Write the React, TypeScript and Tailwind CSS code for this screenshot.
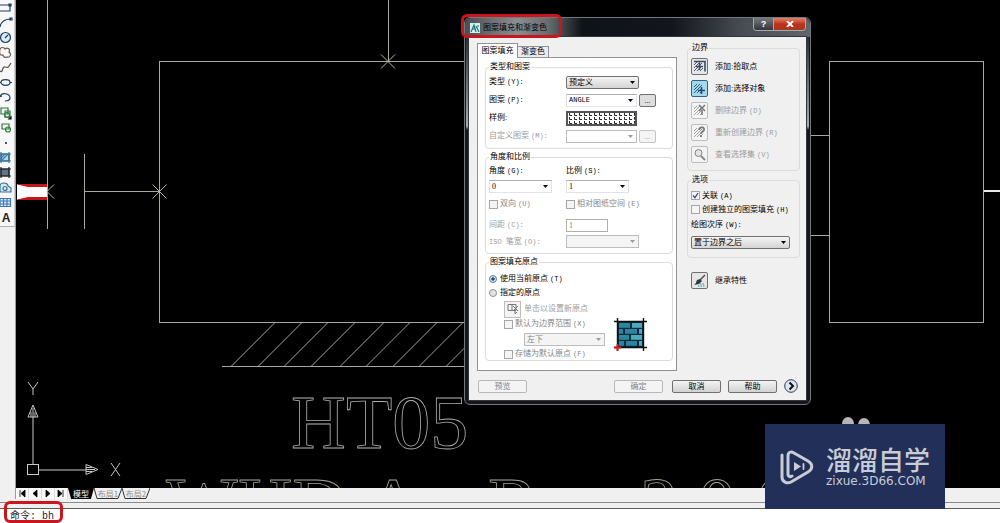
import { useState } from 'react';
import type { ReactNode } from 'react';
import clsx from 'clsx';

function Key({ children }: { children: ReactNode }) {
  return <span className="ml-0.5 font-['Liberation_Mono',monospace] text-[7px]">{children}</span>;
}

function Group({ title, className, children }: { title: string; className?: string; children: ReactNode }) {
  return (
    <fieldset className={clsx('min-w-0 rounded-sm border border-[#dcdcdc] px-[3px]', className)}>
      <legend className="h-3 px-px leading-3">{title}</legend>
      {children}
    </fieldset>
  );
}

type SelectProps = {
  id: string;
  label?: string;
  options: string[];
  disabled?: boolean;
  flat?: boolean;
  className?: string;
};

function Select({ id, label, options, disabled, flat, className }: SelectProps) {
  return (
    <div className={clsx('relative h-[13px]', className)}>
      <select
        id={id}
        aria-label={label}
        disabled={disabled}
        className={clsx(
          'block h-full w-full appearance-none border pl-0.5 pr-3 leading-[11px] disabled:opacity-100',
          flat && !disabled && 'border-[#e2e3ea] border-t-[#abadb3] bg-white',
          !flat && !disabled && 'rounded-xs border-[#707070] bg-linear-to-b from-[#f4f4f4] to-[#d4d4d4]',
          disabled && 'border-[#bcbcbc] text-[#838383]',
          disabled && (flat ? 'bg-white' : 'bg-[#f4f4f4]'),
        )}
      >
        {options.map((o) => (
          <option key={o}>{o}</option>
        ))}
      </select>
      <svg viewBox="0 0 5 3" className="pointer-events-none absolute right-1 top-[5px] h-[3px] w-[5px]">
        <path d="M0 0h5L2.500 3z" fill={disabled ? '#9a9a9a' : '#000'} />
      </svg>
    </div>
  );
}

type CheckProps = { label: string; hotkey?: string; disabled?: boolean; defaultChecked?: boolean };

function Check({ label, hotkey, disabled, defaultChecked }: CheckProps) {
  return (
    <label className={clsx('flex items-center gap-0.5', disabled && 'text-[#838383]')}>
      <span className="relative block h-[9px] w-[9px] shrink-0">
        <input
          type="checkbox"
          disabled={disabled}
          defaultChecked={defaultChecked}
          className="peer block h-full w-full appearance-none border border-[#a4a6a8] bg-[#f4f4f4]"
        />
        <svg viewBox="0 0 9 9" className="pointer-events-none absolute inset-0 hidden peer-checked:block">
          <path d="M2 4.500l2 2.200 3-4.700" fill="none" stroke="#3b4a90" strokeWidth="1.300" />
        </svg>
      </span>
      <span>
        {label}
        {hotkey && <Key>{hotkey}</Key>}
      </span>
    </label>
  );
}

function Radio({ label, hotkey, ...rest }: { label: string; hotkey?: string; checked: boolean; onChange: () => void }) {
  return (
    <label className="flex h-[14px] items-center gap-[3px]">
      <input
        type="radio"
        name="origin"
        className="h-2 w-2 appearance-none rounded-full border border-[#8e8f8f] bg-[#e4e4e4] checked:border-[#5f7a92] checked:bg-[radial-gradient(circle,#16324f_0,#2f6c9c_34%,#d5e6f2_48%)]"
        {...rest}
      />
      <span>
        {label}
        {hotkey && <Key>{hotkey}</Key>}
      </span>
    </label>
  );
}

function PushButton({ children, disabled }: { children: ReactNode; disabled?: boolean }) {
  return (
    <button
      type="button"
      disabled={disabled}
      className={clsx(
        'h-[13px] w-[49px] rounded-xs border leading-[11px]',
        disabled
          ? 'border-[#b8b8b8] bg-[#f4f4f4] text-[#838383]'
          : 'border-[#707070] bg-linear-to-b from-[#f4f4f4] to-[#d2d2d2]',
      )}
    >
      {children}
    </button>
  );
}

type ToolProps = { label: string; hotkey?: string; disabled?: boolean; active?: boolean; icon: ReactNode };

function ToolRow({ label, hotkey, disabled, active, icon }: ToolProps) {
  return (
    <button
      type="button"
      disabled={disabled}
      className={clsx('flex items-center gap-[7px] text-left', disabled && 'text-[#9c9c9c]')}
    >
      <span
        className={clsx(
          'flex h-[17px] w-[17px] items-center justify-center rounded-xs border',
          disabled && 'border-[#bdbdbd] bg-[#f4f4f4]',
          active && 'border-[#2c628b] bg-[#a6d8ec]',
          !disabled && !active && 'border-[#707070] bg-[#e6e6e6]',
        )}
      >
        {icon}
      </span>
      <span>
        {label}
        {hotkey && <Key>{hotkey}</Key>}
      </span>
    </button>
  );
}

function HatchIcon({ color, children }: { color: string; children?: ReactNode }) {
  return (
    <svg viewBox="0 0 13 13" className="h-[13px] w-[13px]" fill="none" stroke={color}>
      <path d="M1 5l3-3M1 8l6-6M1 11l8-8M4 11l5-5M7 11l3-3" strokeWidth="0.900" />
      {children}
    </svg>
  );
}

function BrickPreview() {
  const bricks = [
    [5, 5, 11], [18, 5, 10],
    [5, 11, 4], [11, 11, 12], [25, 11, 3],
    [5, 17, 10], [17, 17, 11],
    [5, 23, 5], [12, 23, 11], [25, 23, 3],
  ];
  return (
    <svg viewBox="0 0 33 33" className="h-[33px] w-[33px]">
      <rect x="4" y="4" width="25" height="25" fill="#0f2a3a" />
      {bricks.map(([x, y, w]) => (
        <rect key={`${x}-${y}`} x={x} y={y} width={w} height="4.800" fill={x > 16 ? '#4fa9be' : '#2b86a2'} />
      ))}
      <path d="M0 3.500h33M3.500 0v33M29.500 0v33M0 29.500h33" stroke="#111" strokeWidth="1.400" />
      <path d="M0 29.500h7M3.500 26v7" stroke="#d01818" strokeWidth="1.800" />
    </svg>
  );
}

const DRAW_TOOLS: { name: string; icon: ReactNode }[] = [
  { name: '矩形', icon: <path d="M-2 5h12v6H-2zM9 4h2v2H9z" /> },
  { name: '圆弧', icon: <path d="M0 12C1 6 5 4 11 4M10 3h2v2h-2z" /> },
  {
    name: '圆',
    icon: (
      <>
        <circle cx="5.500" cy="7.500" r="5" fill="#dde9f3" />
        <path d="M5 8l3-3" />
      </>
    ),
  },
  { name: '修订云线', icon: <path stroke="#6b5a54" d="M0 4c1-2 4-2 5 0 2-2 6 0 4 3 3 2 1 6-2 5-2 1-4 0-4-2-3 1-4-2-3-6" /> },
  { name: '样条曲线', icon: <path stroke="#59504c" d="M0 11c3 3 2-5 5-4s3 1 6-4" /> },
  {
    name: '椭圆',
    icon: (
      <>
        <ellipse cx="5.500" cy="7.500" rx="4.500" ry="2.800" />
        <path d="M-1 7.500h2M10 7.500h2" />
      </>
    ),
  },
  { name: '椭圆弧', icon: <path d="M0 7c1-5 10-4 10 1 0 2-2 3-5 3M2 6l-3 1 0-3" /> },
  {
    name: '插入块',
    icon: (
      <>
        <path stroke="#2f7a3c" d="M1 3h7v6H1zM5 6h5v6H5z" />
        <circle cx="7" cy="10" r="2.500" stroke="#2f7a3c" />
        <path d="M11 14h-2l2-2z" fill="#111" stroke="#111" />
      </>
    ),
  },
  {
    name: '创建块',
    icon: (
      <>
        <path stroke="#2f7a3c" d="M2 4h7v5H2z" />
        <circle cx="8" cy="9.500" r="2.500" stroke="#2f7a3c" />
      </>
    ),
  },
  { name: '点', icon: <circle cx="6" cy="8" r="0.500" fill="#1b3e63" /> },
  {
    name: '图案填充',
    icon: (
      <>
        <path fill="#b5d7ea" d="M1 4h8v7H1z" />
        <path stroke="#3c7aa4" d="M-1 4h12M-1 11h12M1 2v11M9 2v11M2 10l6-6M1 8l4-4" />
      </>
    ),
  },
  {
    name: '渐变色',
    icon: (
      <>
        <path fill="#6b727c" d="M1 4h8v7H1z" />
        <path stroke="#1d232b" d="M-1 4h12M-1 11h12M1 2v11M9 2v11" />
      </>
    ),
  },
  {
    name: '面域',
    icon: (
      <>
        <path stroke="#3c6f94" fill="#d5e7f2" d="M0 12V6c0-4 8-4 8 0l3 2v4z" />
        <circle cx="5" cy="8.500" r="2" stroke="#3c6f94" />
      </>
    ),
  },
  { name: '表格', icon: <path stroke="#3d78b5" fill="#dcebfa" d="M0 3.500h10.500v8H0zM0 6h10M0 9h10M3.500 4v7M7 4v7" /> },
];

function DrawToolbar() {
  return (
    <aside className="w-4 shrink-0 border-r border-[#9c9c9c] bg-[#f0f0f0]">
      <div className="border-b border-r border-b-[#b0b0b0] border-r-[#d0d0d0] bg-[#f8f8f8]">
        {DRAW_TOOLS.map((t) => (
          <button key={t.name} type="button" aria-label={t.name} className="block h-[15px] w-full overflow-hidden">
            <svg viewBox="0 0 14 15" className="h-[15px] w-[14px]" fill="none" stroke="#1b3e63" strokeWidth="1.200">
              {t.icon}
            </svg>
          </button>
        ))}
        <button type="button" className="block h-[16px] w-full pr-0.5 font-['Liberation_Sans',sans-serif] text-[12px] font-bold leading-[12px] text-[#222]">
          A
        </button>
      </div>
    </aside>
  );
}

// bottom x of each hatch line under the rectangle
const HATCH_X = [231, 258, 284, 311, 340, 366, 393, 419, 446];

function Drawing() {
  return (
    <svg className="block h-full w-full" fill="none" fontFamily="'Liberation Serif', serif">
      <g transform="translate(-16 0)">
        <path d="M17 184h30v16H17z" fill="#c4161c" />
        <path d="M17 184.500l11 2.500h19v10H28l-11 2.500z" fill="#fff" />
        <g stroke="#a9a99a" shapeRendering="crispEdges">
          <path d="M47.500 0v229M84.500 154v75M84 191.500h75" />
          <path d="M159.500 61v261M159 61.500h560M159 322.500h560M388.500 0v61" />
          <path d="M829.500 61h154v261h-154zM700 135.500h129M700 235.500h129" />
          <path d="M222 366.500h400" />
        </g>
        <path d="M984 191h400" stroke="#e8e8e8" strokeWidth="2" />
        <path d="M54 184.500l-7 7 7 7M152.500 184.500l14 14m0-14l-14 14M381 54.500l14 14m0-14l-14 14" stroke="#b9b9a4" />
        {HATCH_X.map((x) => (
          <path key={x} d={`M${x} 366.500l44-44`} stroke="#b4b4b4" strokeWidth="0.900" />
        ))}
        <g stroke="#c8c8c8">
          <path d="M33 465v-48M38.500 470H86" />
          <rect x="27.500" y="464.500" width="11" height="10" />
          <path d="M33 405l-5 12h10zM98 469.500l-12-5v10zM33 408v9M31 412v5M35 412v5M95 469.500h-9M92 467.500h-6M92 471.500h-6" />
          <path d="M28 382l5 7 5-7M33 389v6M111 463l9 13m0-13l-9 13" />
        </g>
        <text x="291" y="448" fontSize="76" stroke="#b0b0b0" strokeWidth="0.800">HT05</text>
        <g fontSize="76" stroke="#a8a890" strokeWidth="0.800">
          <text x="166" y="530">WHD</text>
          <text x="366" y="530">A</text>
          <text x="488" y="530">R</text>
          <text x="640" y="530">2</text>
          <text x="698" y="530">0</text>
          <text x="756" y="530">0</text>
        </g>
      </g>
    </svg>
  );
}

function LayoutTabs() {
  return (
    <div className="flex h-[11px] items-stretch bg-[#f0f0f0] font-['Noto_Sans_CJK_SC',sans-serif] text-[8px] leading-[11px]">
      {[
        ['第一个', 'M4 2v7M9 2v7L5 5.500z'],
        ['上一个', 'M8 2v7L4 5.500z'],
        ['下一个', 'M4 2v7l4-3.500z'],
        ['最后一个', 'M8 2v7M3 2v7l4-3.500z'],
      ].map(([name, d]) => (
        <button key={name} type="button" aria-label={name} className="w-[13px] border-r border-[#dadada] bg-[#fafafa]">
          <svg viewBox="0 0 12 11" className="h-[11px] w-3">
            <path d={d} fill="#000" stroke="#000" strokeWidth="0.800" />
          </svg>
        </button>
      ))}
      <button type="button" className="w-[26px] bg-black text-white [clip-path:polygon(0_0,100%_0,88%_100%,12%_100%)]">
        模型
      </button>
      {['布局1', '布局2'].map((t) => (
        <button key={t} type="button" className="relative w-7 text-[#8d8d8d]">
          <svg viewBox="0 0 28 11" className="absolute inset-0 h-full w-full" fill="none">
            <path d="M0 0l3 10.500h21L28 0" stroke="#333" />
          </svg>
          {t}
        </button>
      ))}
    </div>
  );
}

function HatchTab() {
  const [origin, setOrigin] = useState<'current' | 'specified'>('current');

  return (
    <div className="flex flex-1 flex-col gap-0.5 border border-[#8f9297] bg-white pb-[9px] pl-[7px] pr-[3px] pt-[3px]">
      <Group title="类型和图案" className="pb-[3px]">
        <div className="grid grid-cols-[77px_1fr] auto-rows-[18px] items-center">
          <label htmlFor="type">类型<Key>(Y):</Key></label>
          <Select id="type" options={['预定义', '用户定义', '自定义']} className="w-[73px]" />
          <label htmlFor="pattern">图案<Key>(P):</Key></label>
          <div className="flex items-center gap-0.5">
            <Select id="pattern" options={['ANGLE', 'ANSI31']} flat className="w-[71px] font-['Liberation_Mono',monospace] text-[7px]" />
            <button type="button" className="h-[13px] w-[17px] rounded-xs border border-[#707070] bg-[#dedede] leading-[7px]">...</button>
          </div>
          <span>样例:</span>
          <button type="button" aria-label="样例" className="h-[15px] w-[71px] border-2 border-[#555] bg-white">
            <svg className="block h-full w-full">
              <pattern id="angle" width="5" height="4" patternUnits="userSpaceOnUse">
                <path d="M1.500 0v2.500H4" fill="none" stroke="#111" strokeWidth="0.900" />
              </pattern>
              <rect width="100%" height="100%" fill="url(#angle)" />
            </svg>
          </button>
          <label htmlFor="custom" className="text-[#9c9c9c]">自定义图案<Key>(M):</Key></label>
          <div className="flex items-center gap-0.5">
            <Select id="custom" options={['']} flat disabled className="w-[71px]" />
            <button type="button" disabled className="h-[13px] w-[17px] rounded-xs border border-[#c4c4c4] bg-[#f4f4f4] leading-[7px] text-[#9c9c9c]">...</button>
          </div>
        </div>
      </Group>

      <Group title="角度和比例" className="pb-[5px]">
        <div className="grid grid-cols-[77px_1fr] grid-rows-[16px_14px_22px_20px_13px] items-center">
          <label htmlFor="angle-value">角度<Key>(G):</Key></label>
          <label htmlFor="scale">比例<Key>(S):</Key></label>
          <Select id="angle-value" options={['0', '45', '90']} flat className="w-[63px]" />
          <Select id="scale" options={['1', '2', '5']} flat className="w-[63px]" />
          <Check label="双向" hotkey="(U)" disabled />
          <Check label="相对图纸空间" hotkey="(E)" disabled />
          <label htmlFor="spacing" className="text-[#9c9c9c]">间距<Key>(C):</Key></label>
          <input id="spacing" disabled defaultValue="1" className="h-[13px] w-[42px] border border-[#afafaf] bg-white px-0.5 text-[#777]" />
          <label htmlFor="iso" className="text-[#9c9c9c]">
            <span className="font-['Liberation_Mono',monospace] text-[7px]">ISO </span>笔宽<Key>(O):</Key>
          </label>
          <Select id="iso" options={['']} disabled className="w-[73px]" />
        </div>
      </Group>

      <Group title="图案填充原点">
        <div className="pt-1">
          <Radio label="使用当前原点" hotkey="(T)" checked={origin === 'current'} onChange={() => setOrigin('current')} />
          <Radio label="指定的原点" checked={origin === 'specified'} onChange={() => setOrigin('specified')} />
        </div>
        <div className="flex justify-between pl-[15px] pr-[22px]">
          <div>
            <button type="button" disabled className="flex h-[18px] items-center gap-[3px] text-[#9c9c9c]">
              <span className="flex h-[17px] w-[17px] items-center justify-center border border-[#bdbdbd] bg-[#f4f4f4]">
                <svg viewBox="0 0 12 12" className="h-3 w-3" fill="none" stroke="#777">
                  <path d="M1 1.500h8v6H1zM5 1v6M6 3l5 5M11 3L6 8M8 6v5l2-2" />
                </svg>
              </span>
              单击以设置新原点
            </button>
            <div className="flex h-3 items-center">
              <Check label="默认为边界范围" hotkey="(X)" disabled />
            </div>
            <div className="flex h-[18px] items-center pl-5">
              <Select id="extents" label="边界范围" options={['左下', '右下', '右上', '左上', '正中']} disabled className="w-[81px]" />
            </div>
            <div className="flex h-3 items-center">
              <Check label="存储为默认原点" hotkey="(F)" disabled />
            </div>
          </div>
          <div className="self-end pb-[9px]">
            <BrickPreview />
          </div>
        </div>
      </Group>
    </div>
  );
}

function BoundaryColumn() {
  return (
    <div className="flex min-w-0 flex-1 flex-col pl-[10px] pr-1.5">
      <Group title="边界" className="mt-[5px]">
        <div className="flex flex-col gap-[5px] pb-[7px] pt-1">
          <ToolRow label="添加:拾取点" icon={<HatchIcon color="#3c4a66"><path d="M1 1.500h11v10M6.500 3v7M3 6.500h7" strokeWidth="1.600" /></HatchIcon>} />
          <ToolRow label="添加:选择对象" active icon={<HatchIcon color="#234f6e"><path d="M8.500 5v7M5 8.500h7" strokeWidth="1.600" /></HatchIcon>} />
          <ToolRow label="删除边界" hotkey="(D)" disabled icon={<HatchIcon color="#9a9a9a"><path d="M6 1l6 6M12 1L6 7M9 6v5" strokeWidth="1.500" stroke="#777" /></HatchIcon>} />
          <ToolRow label="重新创建边界" hotkey="(R)" disabled icon={<HatchIcon color="#9a9a9a"><path d="M6 4c1-4 6-3 5 0-1 2-3 2-3 4M8 9v2" strokeWidth="1.800" stroke="#777" /></HatchIcon>} />
          <ToolRow
            label="查看选择集"
            hotkey="(V)"
            disabled
            icon={
              <svg viewBox="0 0 13 13" className="h-[13px] w-[13px]" fill="none" stroke="#858585">
                <circle cx="5.500" cy="5" r="3.500" fill="#e4e4e4" />
                <path d="M8 8l4 4" strokeWidth="1.800" />
              </svg>
            }
          />
        </div>
      </Group>

      <Group title="选项" className="mt-[3px] pb-2">
        <div className="flex flex-col gap-px pt-[3px]">
          <div className="flex h-[13px] items-center"><Check label="关联" hotkey="(A)" defaultChecked /></div>
          <div className="flex h-[13px] items-center"><Check label="创建独立的图案填充" hotkey="(H)" /></div>
          <label htmlFor="order" className="flex h-4 items-center">绘图次序<Key>(W):</Key></label>
          <Select id="order" options={['置于边界之后', '置于边界之前', '后置', '前置', '不指定']} className="mt-0.5 w-[99px]" />
        </div>
      </Group>

      <div className="mt-3.5 pl-1">
        <ToolRow
          label="继承特性"
          icon={
            <svg viewBox="0 0 13 13" className="h-[13px] w-[13px]" fill="none">
              <path d="M12 1L7 6" stroke="#555" strokeWidth="1.600" />
              <path d="M7 5l2 2-3 3-5 1c2-1 2-3 3-5z" fill="#2d3a44" />
              <path d="M5 12h7M7 10h5" stroke="#3f8c8c" strokeDasharray="1.500 1" />
            </svg>
          }
        />
      </div>
    </div>
  );
}

function HatchDialog() {
  return (
    <div
      role="dialog"
      aria-labelledby="dialog-title"
      className="absolute left-[464px] top-[17px] w-[347px] rounded-md border border-[#73777e] bg-[linear-gradient(180deg,#15181d_0%,#3a3f45_8%,#a8acb0_28%,#14161b_29%)] px-1 pb-1 font-['Liberation_Serif','Noto_Sans_CJK_SC',serif] text-[8px] leading-3 text-black shadow-[inset_0_0_0_1px_#16181d]"
    >
      <header className="-mx-1 flex h-[19px] items-center gap-[3px] rounded-t-md bg-[linear-gradient(90deg,#4a4e53_0,#8b8e91_15%,#6a6d70_24%,#0e1319_34%,#12161c_60%,#474c52_80%,#60656b_100%)] pl-[5px]">
        <svg viewBox="0 0 10 10" className="h-[10px] w-[10px]">
          <rect width="10" height="10" fill="#d9ecec" />
          <path d="M1 9l3-7 2 7M2 6h3M6 3l3 6M7 3h2" fill="none" stroke="#17767c" strokeWidth="1.200" />
        </svg>
        <h1 id="dialog-title" className="flex-1">图案填充和渐变色</h1>
        <div className="mr-1 flex self-start overflow-hidden rounded-b-sm border border-t-0 border-[#a6a9ad]">
          <button type="button" aria-label="帮助" className="h-3 w-[19px] bg-linear-to-b from-[#777b80] to-[#33373c] font-['Liberation_Sans',sans-serif] text-[9px] font-bold leading-3 text-white">?</button>
          <button type="button" aria-label="关闭" className="flex h-3 w-8 items-center justify-center border-l border-[#a6a9ad] bg-linear-to-b from-[#d9836f] via-[#c0301a] to-[#a33a20]">
            <svg viewBox="0 0 8 6" className="h-1.5 w-2"><path d="M1 0l6 6M7 0L1 6" stroke="#fff" strokeWidth="1.800" /></svg>
          </button>
        </div>
      </header>

      <div className="bg-[#f0f0f0] pb-[7px] shadow-[0_0_0_1px_#33363b]">
        <div className="flex">
          <div className="ml-2 flex w-[200px] flex-col pt-[6px]">
            <div role="tablist" className="flex h-[14px] items-end">
              <button type="button" role="tab" aria-selected="true" className="relative -mb-px h-[15px] w-[41px] border border-b-0 border-[#8f9297] bg-white">图案填充</button>
              <button type="button" role="tab" aria-selected="false" className="h-[11px] w-[31px] border border-b-0 border-l-0 border-[#8f9297] bg-[#ebebeb] leading-[10px]">渐变色</button>
            </div>
            <HatchTab />
          </div>
          <BoundaryColumn />
        </div>
        <div className="mt-2 flex items-center pl-[9px] pr-2">
          <PushButton disabled>预览</PushButton>
          <div className="ml-auto flex items-center gap-[7px]">
            <span className="mr-0.5 flex"><PushButton disabled>确定</PushButton></span>
            <PushButton>取消</PushButton>
            <PushButton>帮助</PushButton>
            <button type="button" aria-label="展开">
              <svg viewBox="0 0 14 14" className="block h-[14px] w-[14px]" fill="none">
                <circle cx="7" cy="7" r="6.300" fill="#dde7f2" stroke="#2a3b55" />
                <path d="M5.500 3.500L9 7l-3.500 3.500" stroke="#111" strokeWidth="2" />
              </svg>
            </button>
          </div>
        </div>
      </div>

      <div className="pointer-events-none absolute -left-[4px] -top-[4px] h-6 w-[101px] rounded-md border-[3px] border-[#c9151b]" />
    </div>
  );
}

function Watermark() {
  return (
    <div className="absolute bottom-[14px] right-[55px] flex h-[85px] w-[180px] items-center gap-3 bg-[#223059] pl-[15px] text-[#c9ccd6]">
      <svg viewBox="0 0 34 10" className="absolute -top-[7px] left-[76px] -z-10 h-[10px] w-[34px]">
        <ellipse cx="7" cy="7" rx="6" ry="7" fill="#b9b5ba" />
        <ellipse cx="23" cy="8" rx="6" ry="7" fill="#b9b5ba" />
      </svg>
      <svg viewBox="0 0 34 36" className="h-9 w-[34px]" fill="none" stroke="currentColor" strokeLinecap="round">
        <path d="M2 6v22c0 5 5 7 9 5l17-10c5-3 5-8 0-11L14 4c-3-2-6-1-6 3v18c0 3 3 3 4 2" strokeWidth="3" />
        <path d="M14 13v9l7-4.500z" fill="currentColor" stroke="none" />
        <path d="M23.500 15v5" strokeWidth="1.800" />
      </svg>
      <div className="pb-1">
        <p className="font-['Noto_Sans_CJK_SC',sans-serif] text-[26px] font-medium leading-8">溜溜自学</p>
        <p className="font-['DejaVu_Sans',sans-serif] text-[12px] leading-3">zixue.3D66.COM</p>
      </div>
    </div>
  );
}

export default function App() {
  return (
    <div className="relative isolate flex h-screen flex-col overflow-hidden bg-[#f0f0f0]">
      <div className="relative -z-20 flex min-h-0 flex-1">
        <DrawToolbar />
        <main className="flex min-w-0 flex-1 flex-col">
          <div className="min-h-0 flex-1 overflow-hidden bg-black">
            <Drawing />
          </div>
          <LayoutTabs />
        </main>
      </div>

      <footer className="relative">
        <div className="mt-[3px] h-[7px] border-y border-[#8a8a8a] border-b-[#5c5c5c] bg-[#f0f0f0]" />
        <div className="flex h-[14px] items-center bg-white pl-[10px] font-['Liberation_Mono','Noto_Sans_CJK_SC',monospace] text-[10px] text-[#222]">
          <label htmlFor="command" className="whitespace-pre">命令: </label>
          <input id="command" defaultValue="bh" className="h-3 min-w-0 flex-1 outline-none" />
        </div>
        <div className="pointer-events-none absolute left-1 top-0.5 h-[22px] w-[59px] rounded-md border-[3px] border-[#c9151b]" />
      </footer>

      <HatchDialog />
      <Watermark />
    </div>
  );
}
